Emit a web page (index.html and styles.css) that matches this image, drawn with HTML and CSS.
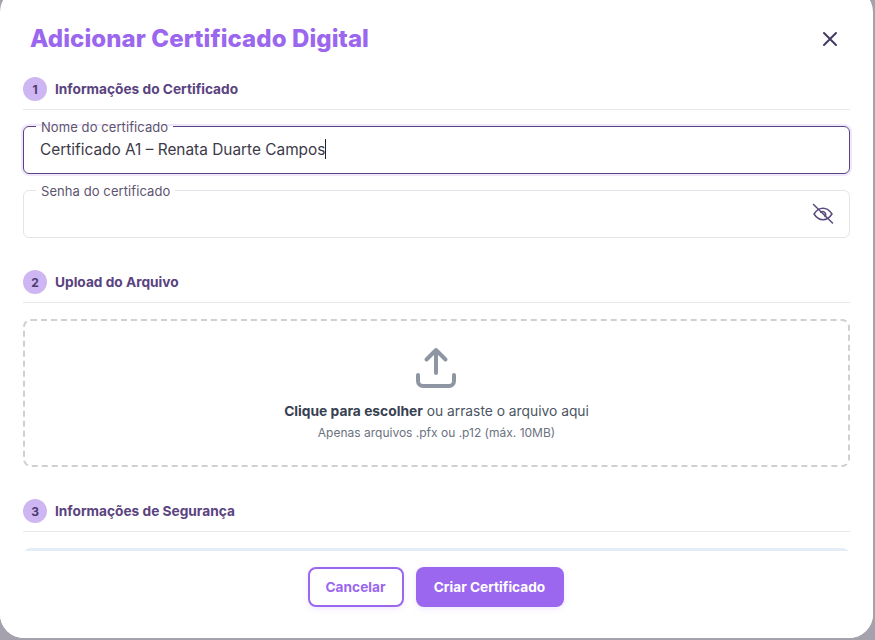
FILE: index.html

```html
<!DOCTYPE html>
<html lang="pt-BR">
<head>
  <meta charset="UTF-8">
  <title>Adicionar Certificado Digital</title>
  <link rel="stylesheet" href="styles.css">
</head>
<body>
  <div class="modal">
    <div class="modal-body">
      <header class="modal-header">
        <h1>Adicionar Certificado Digital</h1>
        <button class="close-btn" aria-label="Fechar">
          <svg width="24" height="24" viewBox="0 0 24 24" fill="none" stroke="#453a63" stroke-width="2" stroke-linecap="round"><path d="M6 6l12 12M18 6L6 18"/></svg>
        </button>
      </header>

      <section class="section section-info">
        <div class="section-title"><span class="step">1</span><h2>Informações do Certificado</h2></div>
        <fieldset class="field field-focused">
          <legend>Nome do certificado</legend>
          <div class="field-value">Certificado A1 – Renata Duarte Campos<span class="caret"></span></div>
        </fieldset>
        <fieldset class="field field-password">
          <legend>Senha do certificado</legend>
          <div class="field-value"></div>
          <svg class="eye" width="24" height="24" viewBox="0 0 24 24" fill="none" stroke="#5b4a7d" stroke-width="1.5" stroke-linecap="round" stroke-linejoin="round">
            <path d="M3 12c2.500-3.800 5.700-5.700 9-5.700s6.500 1.900 9 5.700c-2.500 3.800-5.700 5.700-9 5.700S5.500 15.800 3 12z"/>
            <path d="M9.800 10.200a3 3 0 0 1 4.200 4.200"/>
            <path d="M2.500 2.500l19 18.500"/>
          </svg>
        </fieldset>
      </section>

      <section class="section section-upload">
        <div class="section-title"><span class="step">2</span><h2>Upload do Arquivo</h2></div>
        <div class="dropzone">
          <svg class="upload-icon" width="48" height="48" viewBox="0 0 48 48" fill="none" stroke="#8f96a3" stroke-width="4" stroke-linecap="round" stroke-linejoin="round">
            <path d="M24 29V6M14.500 15.500L24 6l9.500 9.500"/>
            <path d="M6 31v6a5 5 0 0 0 5 5h26a5 5 0 0 0 5-5v-6"/>
          </svg>
          <p class="drop-main"><strong>Clique para escolher</strong> ou arraste o arquivo aqui</p>
          <p class="drop-hint">Apenas arquivos .pfx ou .p12 (máx. 10MB)</p>
        </div>
      </section>

      <section class="section section-security">
        <div class="section-title"><span class="step">3</span><h2>Informações de Segurança</h2></div>
        <div class="notice"></div>
      </section>
    </div>

    <footer class="modal-footer">
      <button class="btn btn-cancel">Cancelar</button>
      <button class="btn btn-create">Criar Certificado</button>
    </footer>
  </div>
</body>
</html>
```

FILE: styles.css

```css
html, body {
  height: 100%;
}
body {
  margin: 0;
  overflow: hidden;
  background-color: #a5a2ad;
  font-family: Inter, "Liberation Sans", sans-serif;
}
.modal {
  width: 873px;
  height: 650px;
  margin-top: -12px;
  background-color: white;
  border-radius: 24px;
  overflow: hidden;
  display: flex;
  flex-direction: column;
}
.modal-body {
  flex-grow: 1;
  min-height: 0;
  overflow: hidden;
  padding: 12px 23px 0;
}
.modal-header {
  display: flex;
  justify-content: space-between;
  align-items: center;
  height: 77px;
  padding-left: 7px;
}
.modal-header h1 {
  margin: 0 0 1px;
  font-size: 24px;
  font-weight: 800;
  letter-spacing: 0.08px;
  color: #9b67ee;
}
.close-btn {
  display: flex;
  padding: 0;
  margin-right: 8px;
  border: none;
  background: none;
}
.section-title {
  display: flex;
  align-items: center;
  gap: 8px;
  padding-bottom: 8px;
  border-bottom: 1px solid #e8e8ec;
}
.section-title h2 {
  margin: 0;
  font-size: 13.700px;
  font-weight: 700;
  color: #5a4380;
}
.step {
  display: flex;
  justify-content: center;
  align-items: center;
  width: 24px;
  height: 24px;
  border-radius: 50%;
  background-color: #cdb6f1;
  color: #4c3a73;
  font-size: 12px;
  font-weight: 700;
}
.field {
  margin: 0;
  padding: 0 16px;
  height: 56px;
  box-sizing: border-box;
  border: 1px solid #e4e3ea;
  border-radius: 6px;
  position: relative;
}
.field legend {
  margin-left: -4px;
  padding: 2px 5px 0;
  font-size: 13px;
  letter-spacing: 0.08px;
  line-height: 14px;
  color: #5d5470;
}
.field-value {
  padding-top: 4px;
  font-size: 15.400px;
  line-height: 24px;
  color: #3c3a48;
}
.section-info .field-focused {
  margin-top: 8px;
  border-color: #5a4380;
  box-shadow: 0 0 0 2px #efe7fb;
}
.section-info .field-password {
  margin-top: 8px;
}
.caret {
  display: inline-block;
  width: 1px;
  height: 20px;
  background-color: #222;
  vertical-align: -4px;
}
.eye {
  position: absolute;
  right: 14px;
  top: 4px;
}
.section-upload {
  margin-top: 32px;
}
.dropzone {
  margin-top: 16px;
  height: 148px;
  box-sizing: border-box;
  border: 2px dashed #cfcfd4;
  border-radius: 8px;
  display: flex;
  flex-direction: column;
  align-items: center;
  padding-top: 23px;
}
.upload-icon {
  margin-left: -1px;
}
.drop-main {
  margin: 9px 0 0;
  font-size: 13.800px;
  line-height: 20px;
  color: #4b5563;
}
.drop-main strong {
  color: #374151;
  font-weight: 700;
}
.drop-hint {
  margin: 4px 0 0;
  font-size: 12px;
  line-height: 16px;
  color: #6b7280;
}
.section-security {
  margin-top: 32px;
}
.notice {
  margin-top: 16px;
  height: 40px;
  border-radius: 8px;
  background-color: #e4edf5;
}
.modal-footer {
  flex-shrink: 0;
  display: flex;
  justify-content: center;
  gap: 12px;
  height: 87px;
  box-sizing: border-box;
  padding: 16px 2px 0 0;
  background-color: white;
  border-top-left-radius: 12px;
  border-top-right-radius: 12px;
  margin-top: -87px;
  position: relative;
}
.btn {
  height: 40px;
  border-radius: 8px;
  font-family: inherit;
  font-size: 13.700px;
  font-weight: 700;
  box-shadow: 0 2px 6px rgba(155, 103, 238, 0.15);
}
.btn-cancel {
  width: 96px;
  border: 2px solid #9b67ee;
  background-color: white;
  color: #9b67ee;
}
.btn-create {
  width: 148px;
  border: none;
  background-color: #9b67ee;
  color: white;
}
```
